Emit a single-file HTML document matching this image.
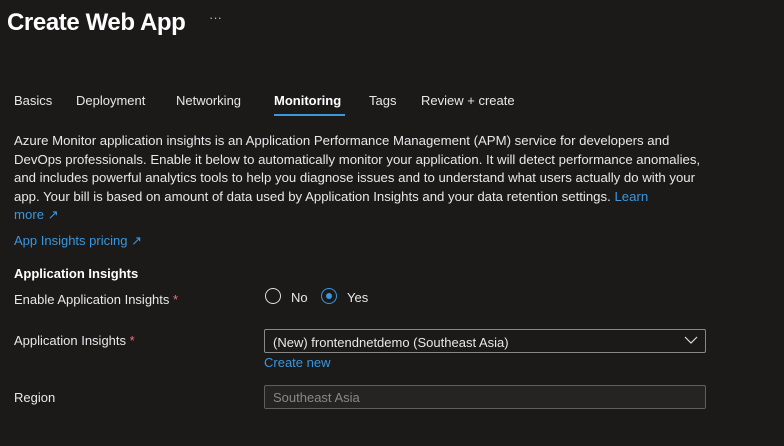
<!DOCTYPE html>
<html><head><style>
body{margin:0;width:784px;height:446px;background:#1b1a19;font-family:"Liberation Sans",sans-serif;color:#fff;position:relative;overflow:hidden;font-size:13px}
.a{position:absolute;white-space:nowrap}
.l{color:#3a96dd}
.p{color:#e8e8e8}
</style></head><body>
<div class="a" style="left:7px;top:9px;font-size:24px;font-weight:bold;letter-spacing:-0.4px">Create Web App</div>
<div class="a" style="left:209px;top:10px;color:#bbb;font-size:13px">···</div>
<div class="a p" style="left:14px;top:93px">Basics</div>
<div class="a p" style="left:76px;top:93px">Deployment</div>
<div class="a p" style="left:176px;top:93px">Networking</div>
<div class="a" style="left:274px;top:93px;font-weight:bold">Monitoring</div>
<div class="a" style="left:274px;top:114px;width:71px;height:2px;background:#3a96dd"></div>
<div class="a p" style="left:369px;top:93px">Tags</div>
<div class="a p" style="left:421px;top:93px">Review + create</div>
<div class="a p" style="left:14px;top:132px;line-height:18.5px;font-size:13.2px">Azure Monitor application insights is an Application Performance Management (APM) service for developers and<br>DevOps professionals. Enable it below to automatically monitor your application. It will detect performance anomalies,<br>and includes powerful analytics tools to help you diagnose issues and to understand what users actually do with your<br>app. Your bill is based on amount of data used by Application Insights and your data retention settings. <span class="l">Learn</span><br><span class="l">more ↗</span></div>
<div class="a l" style="left:14px;top:233px">App Insights pricing ↗</div>
<div class="a" style="left:14px;top:266px;font-weight:bold">Application Insights</div>
<div class="a p" style="left:14px;top:292px">Enable Application Insights <span style="color:#f1707b">*</span></div>
<div class="a" style="left:265px;top:288px;width:16px;height:16px;border:1.5px solid #ddd;border-radius:50%;box-sizing:border-box"></div>
<div class="a p" style="left:291px;top:290px">No</div>
<div class="a" style="left:321px;top:288px;width:16px;height:16px;border:1.5px solid #3a96dd;border-radius:50%;box-sizing:border-box"></div>
<div class="a" style="left:326px;top:293px;width:6px;height:6px;background:#3a96dd;border-radius:50%"></div>
<div class="a p" style="left:347px;top:290px">Yes</div>
<div class="a p" style="left:14px;top:333px">Application Insights <span style="color:#f1707b">*</span></div>
<div class="a" style="left:264px;top:329px;width:442px;height:24px;border:1px solid #8a8886;box-sizing:border-box;border-radius:2px"></div>
<div class="a p" style="left:273px;top:335px">(New) frontendnetdemo (Southeast Asia)</div>
<svg class="a" style="left:684px;top:336px" width="14" height="9"><path d="M1 1l6 6 6-6" stroke="#ddd" fill="none" stroke-width="1.2"/></svg>
<div class="a l" style="left:264px;top:355px">Create new</div>
<div class="a p" style="left:14px;top:390px">Region</div>
<div class="a" style="left:264px;top:385px;width:442px;height:24px;border:1px solid #605e5c;background:#252423;box-sizing:border-box;border-radius:2px"></div>
<div class="a" style="left:273px;top:390px;color:#8a8886">Southeast Asia</div>
</body></html>
